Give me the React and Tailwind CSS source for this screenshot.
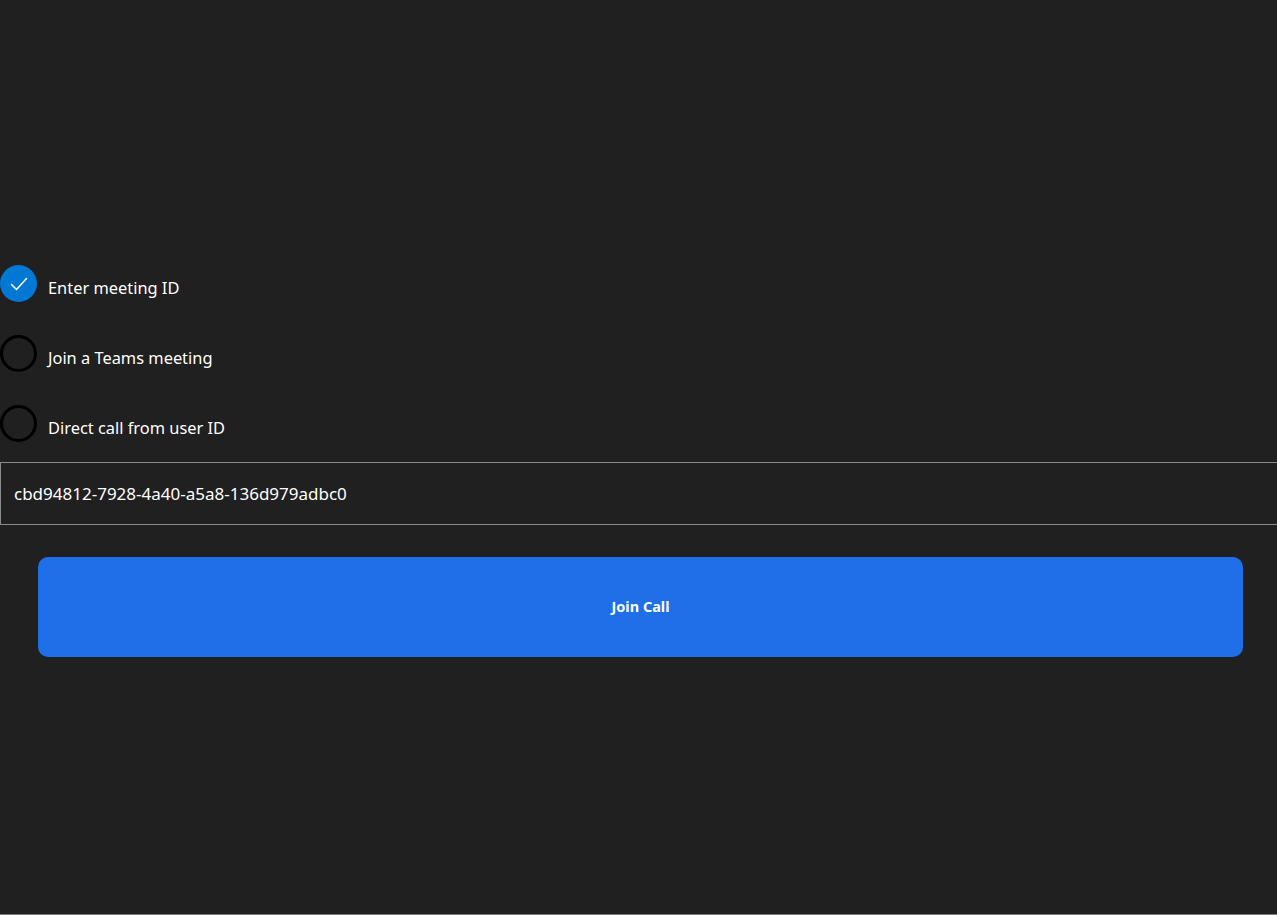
import { useState } from 'react';

const options = ['Enter meeting ID', 'Join a Teams meeting', 'Direct call from user ID'];

function Radio({ checked }) {
  if (checked) {
    return (
      <span className="flex h-[37px] w-[37px] shrink-0 items-center justify-center rounded-full bg-[#0078d4]">
        <svg width="20" height="20" viewBox="0 0 20 20" fill="none">
          <path d="M2.5 10.5l5 5L17.5 4.5" stroke="white" strokeWidth="1.5" strokeLinecap="round" strokeLinejoin="round" />
        </svg>
      </span>
    );
  }
  return <span className="h-[37px] w-[37px] shrink-0 rounded-full border-[3px] border-black" />;
}

export default function App() {
  const [selected, setSelected] = useState(0);

  return (
    <div
      className="flex h-[915px] w-full flex-col border-b border-[#7a7a7a] bg-[#202020] pt-[265px] text-white"
      style={{ fontFamily: '"Noto Sans", "Open Sans", sans-serif' }}
    >
      <div className="flex flex-col gap-[33px]">
        {options.map((label, i) => (
          <button key={label} onClick={() => setSelected(i)} className="flex items-center gap-[11px] text-left">
            <Radio checked={selected === i} />
            <span className="pt-[10px] text-[16.4px] leading-none">{label}</span>
          </button>
        ))}
      </div>

      <input
        defaultValue="cbd94812-7928-4a40-a5a8-136d979adbc0"
        className="mt-[20px] h-[63px] w-[calc(100%+2px)] border border-[#8a8a8a] bg-[#202020] px-[13px] text-[17px] text-white outline-none"
      />

      <div className="pl-[38px] pr-[34px] pt-[32px]">
        <button className="flex h-[100px] w-full items-center justify-center rounded-[10px] bg-[#1f6fe8] text-[14.5px] font-bold text-white">
          Join Call
        </button>
      </div>
    </div>
  );
}
